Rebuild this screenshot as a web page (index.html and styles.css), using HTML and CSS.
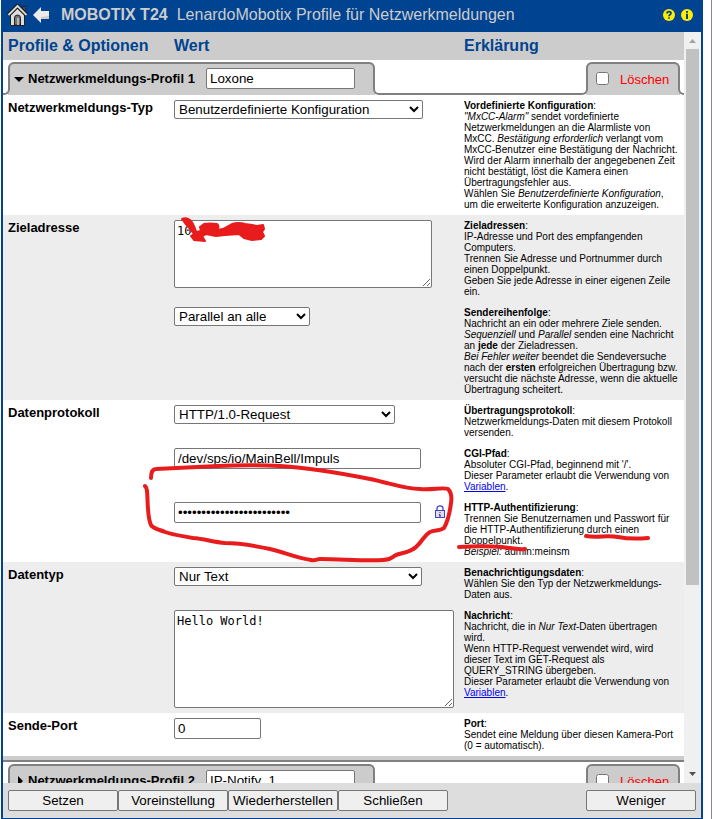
FILE: index.html
```html
<!DOCTYPE html>
<html lang="de">
<head>
<meta charset="utf-8">
<title>MOBOTIX T24 – Profile für Netzwerkmeldungen</title>
<link rel="stylesheet" href="styles.css">
</head>
<body>
<form class="app">
  <header class="bar">
    <a class="icon" href="#" aria-label="Startseite"><svg width="22" height="22" viewBox="0 0 22 22"><path d="M16 2.500h2v7h-2z" fill="#777" stroke="#222"/><path d="M3.500 10v11.500h14V10l-7-7z" fill="#dedede" stroke="#222"/><path d="M7.500 21v-7a3 3 0 0 1 6 0v7z" fill="#777" stroke="#222"/><path d="M10 21v-7h2v7z" fill="#b5b5b5"/><path d="M1.500 11 10.500 2l9 9" fill="none" stroke="#111" stroke-width="4"/><path d="M1.500 11 10.500 2l9 9" fill="none" stroke="#d8d8d8" stroke-width="2"/></svg></a>
    <a class="icon back" href="#" aria-label="Zurück"><svg width="16" height="16" viewBox="0 0 16 16"><path d="M0 8 8 0v4h8v8H8v4z" fill="#ececec"/><path d="M8 12h8V9l-8 1z" fill="#ccc"/></svg></a>
    <h1><b>MOBOTIX T24</b><span>LenardoMobotix Profile für Netzwerkmeldungen</span></h1>
    <a class="icon" href="#" aria-label="Hilfe"><svg width="12" height="12" viewBox="0 0 12 12"><circle cx="6" cy="6" r="6" fill="#fe0"/><path d="M4 4.500C4 2 8 2 8 4.300 8 5.500 6 5.600 6 7.300M6 8.300v1.500" fill="none" stroke="#004390" stroke-width="1.700"/></svg></a>
    <a class="icon" href="#" aria-label="Info"><svg width="12" height="12" viewBox="0 0 12 12"><circle cx="6" cy="6" r="6" fill="#fe0"/><path d="M6 2v1.800M6 4.800V10" stroke="#004390" stroke-width="2"/></svg></a>
  </header>

  <div class="viewport">
    <main class="content">
      <div class="columns heads"><h2>Profile &amp; Optionen</h2><h2>Wert</h2><h2>Erklärung</h2></div>

      <section>
        <div class="tabs">
          <i class="edge first"></i>
          <div class="tab name"><svg class="tri" width="10" height="10" viewBox="0 0 10 10"><path d="M0 3h10L5 8z"/></svg><label for="p1">Netzwerkmeldungs-Profil 1</label><input id="p1" type="text" value="Loxone"></div>
          <i class="edge middle"></i>
          <div class="tab remove"><input id="d1" type="checkbox"><label for="d1">Löschen</label></div>
          <i class="edge last"></i>
        </div>

        <div class="columns row">
          <label class="title" for="type">Netzwerkmeldungs-Typ</label>
          <div class="field"><select id="type" class="w-type"><option>Benutzerdefinierte Konfiguration</option></select></div>
          <p><b>Vordefinierte Konfiguration</b>:<br><em>"MxCC-Alarm"</em> sendet vordefinierte Netzwerkmeldungen an die Alarmliste von MxCC. <em>Bestätigung erforderlich</em> verlangt vom MxCC-Benutzer eine Bestätigung der Nachricht.<br>Wird der Alarm innerhalb der angegebenen Zeit nicht bestätigt, löst die Kamera einen Übertragungsfehler aus.<br>Wählen Sie <em>Benutzerdefinierte Konfiguration</em>,<br>um die erweiterte Konfiguration anzuzeigen.</p>
        </div>

        <div class="columns row alt">
          <label class="title" for="addr">Zieladresse</label>
          <div class="field"><textarea id="addr" class="w-addr">10</textarea></div>
          <p><b>Zieladressen</b>:<br>IP-Adresse und Port des empfangenden Computers.<br>Trennen Sie Adresse und Portnummer durch einen Doppelpunkt.<br>Geben Sie jede Adresse in einer eigenen Zeile ein.</p>
          <div class="field"><select class="w-order" aria-label="Sendereihenfolge"><option>Parallel an alle</option></select></div>
          <p><b>Sendereihenfolge</b>:<br>Nachricht an ein oder mehrere Ziele senden.<br><em>Sequenziell</em> und <em>Parallel</em> senden eine Nachricht an <b>jede</b> der Zieladressen.<br><em>Bei Fehler weiter</em> beendet die Sendeversuche nach der <b>ersten</b> erfolgreichen Übertragung bzw. versucht die nächste Adresse, wenn die aktuelle Übertragung scheitert.</p>
        </div>

        <div class="columns row">
          <label class="title" for="proto">Datenprotokoll</label>
          <div class="field"><select id="proto" class="w-proto"><option>HTTP/1.0-Request</option></select></div>
          <p><b>Übertragungsprotokoll</b>:<br>Netzwerkmeldungs-Daten mit diesem Protokoll versenden.</p>
          <div class="field"><input class="w-text" type="text" value="/dev/sps/io/MainBell/Impuls" aria-label="CGI-Pfad"></div>
          <p><b>CGI-Pfad</b>:<br>Absoluter CGI-Pfad, beginnend mit '/'.<br>Dieser Parameter erlaubt die Verwendung von <a href="#">Variablen</a>.</p>
          <div class="field auth"><input class="w-text" type="password" value="aaaaaaaaaaaaaaaaaaaaaaaa" aria-label="HTTP-Authentifizierung"><svg class="lock" width="10" height="14" viewBox="0 0 10 14"><path d="M2 6V3.500C2 0 8 0 8 3.500V6" fill="none" stroke="#44b" stroke-width="1.300"/><rect x=".5" y="5.500" width="9" height="7" fill="#dde" stroke="#44b"/><path d="M5 7v1M4 9.500h1v1.500M4 11h2" fill="none" stroke="#339"/></svg></div>
          <p><b>HTTP-Authentifizierung</b>:<br>Trennen Sie Benutzernamen und Passwort für die HTTP-Authentifizierung durch einen Doppelpunkt.<br><em>Beispiel:</em> admin:meinsm</p>
        </div>

        <div class="columns row alt">
          <label class="title" for="data">Datentyp</label>
          <div class="field"><select id="data" class="w-data"><option>Nur Text</option></select></div>
          <p><b>Benachrichtigungsdaten</b>:<br>Wählen Sie den Typ der Netzwerkmeldungs-Daten aus.</p>
          <div class="field"><textarea class="w-msg" aria-label="Nachricht">Hello World!</textarea></div>
          <p><b>Nachricht</b>:<br>Nachricht, die in <em>Nur Text</em>-Daten übertragen<br>wird.<br>Wenn HTTP-Request verwendet wird, wird dieser Text im GET-Request als QUERY_STRING übergeben.<br>Dieser Parameter erlaubt die Verwendung von <a href="#">Variablen</a>.</p>
        </div>

        <div class="columns row">
          <label class="title" for="port">Sende-Port</label>
          <div class="field"><input id="port" class="w-port" type="text" value="0"></div>
          <p><b>Port</b>:<br>Sendet eine Meldung über diesen Kamera-Port (0 = automatisch).</p>
        </div>
      </section>

      <section class="next">
        <div class="tabs">
          <i class="edge first"></i>
          <div class="tab name"><svg class="tri" width="10" height="10" viewBox="0 0 10 10"><path d="M4 0v10l5-5z"/></svg><label for="p2">Netzwerkmeldungs-Profil 2</label><input id="p2" type="text" value="IP-Notify_1"></div>
          <i class="edge middle"></i>
          <div class="tab remove"><input id="d2" type="checkbox"><label for="d2">Löschen</label></div>
          <i class="edge last"></i>
        </div>
      </section>
    </main>
    <div class="scrollbar" aria-hidden="true"><svg width="17" height="17" viewBox="0 0 17 17"><path d="M5 11h7L8.500 7z" fill="#a3a3a3"/></svg><i class="thumb"></i><svg width="17" height="17" viewBox="0 0 17 17"><path d="M5 6h7l-3.500 4z" fill="#505050"/></svg></div>
  </div>

  <footer class="actions">
    <button type="button">Setzen</button><button type="button">Voreinstellung</button><button type="button">Wiederherstellen</button><button type="button">Schließen</button><button type="button" class="less">Weniger</button>
  </footer>

  <svg class="marks" width="712" height="819" viewBox="0 0 712 819" fill="none" stroke="#e81c1c" stroke-width="4" stroke-linecap="round" stroke-linejoin="round" aria-hidden="true">
    <path d="M151 478c0-5 1-9 5-9 20-1 40-2 62-3 22-1 40-1 62 0 30 2 60 7 90 13 20 4 34 10 50 10 12 1 24-2 28 0 3 3 4 8 3 14-1 8-3 18-7 25-4 3-9 2-14 4-7 4-7 9-14 15-5 5-14 6-20 8-4 2-5 5-13 5-20 1-42-1-63-1-3 0-5 2-9 1-14-2-28-8-41-11-14-3-30-6-45-6-12-1-20-4-32-5-10-2-20-3-28-6-4-2-12-3-14-7-4-8-3-25-4-34 0-3-1-4-2-5"/>
    <path d="M586 536c12 2 20-1 32 1 10 2 18 2 30 1M459 547c16-1 30-1 43 0 9 1 15 3 23 2"/>
    <path fill="#e81c1c" stroke-width="2" d="M182 219q4-2 8 1 4 4 6 12l5-1-1-4 4-3q6-1 13 0 3 2 0 6l6-1 9-5q7-2 13 0l7 1 5 1 6-1 1 4-2 3 2 4-3 3-9 1-8-2-5-4-14 1-9 1-10-2-4 2 3 5-11-1-3-4 3-2-4-5-5-6z"/>
  </svg>
</form>
</body>
</html>
```
FILE: styles.css
```css
* { box-sizing: border-box; }

body {
  margin: 0;
  background: #fff;
  color: #000;
  font: 13px/16px "Liberation Sans", Arial, sans-serif;
  border-right: 1px solid #8d8793;
}

h1, h2, p { margin: 0; }

.app {
  position: relative;
  display: flex;
  flex-direction: column;
  height: 100vh;
  margin: 0 8px 0 1px;
  border: solid #004390;
  border-width: 0 2px 1px;
}

.bar {
  display: flex;
  align-items: center;
  gap: 6px;
  height: 32px;
  flex: none;
  padding: 0 8px 2px 4px;
  background: #004390;
}

.icon { display: flex; }
.icon.back { margin: 0 6px 0 -2px; }

h1 {
  flex: 1;
  display: flex;
  gap: 9px;
  color: #ccc;
  font-size: 16px;
  font-weight: normal;
}

.viewport {
  display: flex;
  flex: 1;
  min-height: 0;
}

.content {
  flex: 1;
  min-width: 0;
  overflow: hidden;
}

.columns {
  display: grid;
  grid-template-columns: 166px 290px 1fr;
  padding: 5px 2px 5px 5px;
}

.heads {
  height: 28px;
  align-items: center;
  padding: 0 5px;
  background: #ccc;
}

h2 {
  color: #004390;
  font-size: 16px;
}

.row { row-gap: 10px; }
.alt { background: #ededed; }

.title {
  grid-column: 1;
  font-size: 13px;
  font-weight: bold;
}

.field { grid-column: 2; display: flex; align-items: flex-start; }

.row p {
  grid-column: 3;
  font-size: 10px;
  line-height: 11px;
}

a { color: #00e; }

input, select, textarea, button { font-family: "Liberation Sans", Arial, sans-serif; }

input[type="text"], input[type="password"] {
  height: 21px;
  margin: 0;
  padding: 1px 3px;
  border: 1px solid #767676;
  border-radius: 2px;
  background: #fff;
}

select {
  height: 19px;
  margin: 0;
  border: 1px solid #767676;
  border-radius: 2px;
  background-color: #fff;
  color: #000;
}

textarea {
  margin: 0;
  padding: 2px;
  border: 1px solid #767676;
  border-radius: 2px;
  font: 12px/16px "DejaVu Sans Mono", monospace;
}

.w-type { width: 249px; }
.w-order { width: 136px; }
.w-proto { width: 221px; }
.w-data { width: 248px; }
.w-text { width: 247px; }
.w-port { width: 87px; }
.w-addr { width: 258px; height: 68px; }
.w-msg { width: 280px; height: 98px; }

.auth { gap: 14px; }
.lock { margin-top: 3px; }

.tabs {
  display: flex;
  align-items: flex-end;
  height: 35px;
}

.tab {
  position: relative;
  display: flex;
  align-items: center;
  height: 33px;
  padding: 0 6px;
  border-radius: 6px 6px 0 0;
  background: #ccc;
}

.tab::before {
  content: "";
  position: absolute;
  inset: 0 0 6px;
  border: solid #808080;
  border-width: 2px 2px 0;
  border-radius: 6px 6px 0 0;
  pointer-events: none;
}

.tab.name { width: 367px; font-weight: bold; }
.name label { width: 178px; margin-left: 4px; }
.name input { width: 149px; }
.tab.remove { width: 94px; padding: 3px 10px 0; color: #f00; }
.remove input { margin: 0 11px 4px 0; }
.remove label { font-size: 13px; }

.edge {
  z-index: 1;
  height: 8px;
  border: 0 solid #808080;
  border-bottom-width: 2px;
}

.edge.first { width: 7px; margin-right: -2px; border-right-width: 2px; border-bottom-right-radius: 6px; }
.edge.middle { flex: 1; margin: 0 -2px; border-right-width: 2px; border-left-width: 2px; border-radius: 0 0 6px 6px; }
.edge.last { width: 6px; margin-left: -2px; border-left-width: 2px; border-bottom-left-radius: 6px; }

.next {
  border-top: 4px solid #ccc;
}

.next::before {
  content: "";
  display: block;
  height: 2px;
  background: #808080;
}

.scrollbar {
  display: flex;
  flex-direction: column;
  width: 17px;
  flex: none;
  background: #f0f0f0;
}

.thumb {
  flex: 0 0 536px;
  width: 13px;
  margin: 0 2px auto;
  background: #c1c1c1;
}

.scrollbar svg { flex: none; }

.actions {
  display: flex;
  align-items: center;
  height: 35px;
  flex: none;
  padding: 0 5px;
  background: #ddd;
}

button {
  width: 110px;
  height: 21px;
  padding: 0;
  border: 1px solid #767676;
  border-radius: 2px;
  background: #efefef;
  color: #000;
}

.less { margin-left: auto; }

.marks {
  position: absolute;
  top: 0;
  left: -3px;
  z-index: 2;
  pointer-events: none;
}
```
